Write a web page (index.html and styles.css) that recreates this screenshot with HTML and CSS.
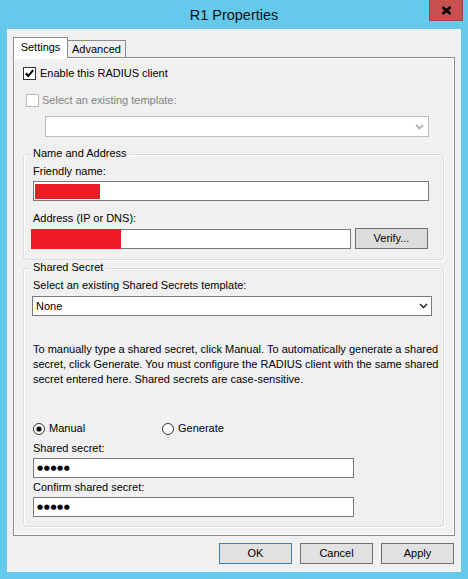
FILE: index.html
```html
<!DOCTYPE html>
<html>
<head>
<meta charset="utf-8">
<title>R1 Properties</title>
<link rel="stylesheet" href="styles.css">
</head>
<body>
<div class="window">
  <div class="titlebar">
    <span class="tb-spacer"></span>
    <div class="title">R1 Properties</div>
    <div class="close-wrap">
      <div class="close">
        <svg width="11" height="9" viewBox="0 0 11 9"><path d="M1.5 1 L9.5 8 M9.5 1 L1.5 8" stroke="#000" stroke-width="2.4" fill="none"/></svg>
      </div>
    </div>
  </div>
  <div class="client">
    <div class="tabs">
      <div class="tab active">Settings</div>
      <div class="tab">Advanced</div>
    </div>
    <div class="page">
      <div class="check-row">
        <svg class="cb" width="13" height="13" viewBox="0 0 13 13"><rect x="0.5" y="0.5" width="12" height="12" fill="#fff" stroke="#333"/><path d="M2.8 6.3 L5.3 9 L10.2 3.2" stroke="#000" stroke-width="2" fill="none"/></svg>
        <span>Enable this RADIUS client</span>
      </div>
      <div class="check-row disabled">
        <svg class="cb" width="13" height="13" viewBox="0 0 13 13"><rect x="0.5" y="0.5" width="12" height="12" fill="#fff" stroke="#bcbcbc"/></svg>
        <span>Select an existing template:</span>
      </div>
      <div class="combo combo-disabled">
        <span class="combo-text"></span>
        <svg class="chev" width="9" height="6" viewBox="0 0 9 6"><path d="M1 1 L4.5 4.5 L8 1" stroke="#b5b5b5" stroke-width="1.8" fill="none"/></svg>
      </div>

      <div class="group g-name">
        <div class="legend">Name and Address</div>
        <div class="label">Friendly name:</div>
        <div class="textbox tb-friendly"><span class="redact red-friendly"></span></div>
        <div class="label label-addr">Address (IP or DNS):</div>
        <div class="addr-row">
          <div class="textbox tb-addr"><span class="redact red-addr"></span></div>
          <div class="btn btn-verify">Verify...</div>
        </div>
      </div>

      <div class="group g-secret">
        <div class="legend">Shared Secret</div>
        <div class="label">Select an existing Shared Secrets template:</div>
        <div class="combo combo-none">
          <span class="combo-text">None</span>
          <svg class="chev" width="9" height="6" viewBox="0 0 9 6"><path d="M1 1 L4.5 4.5 L8 1" stroke="#333" stroke-width="1.6" fill="none"/></svg>
        </div>
        <p class="info">To manually type a shared secret, click Manual. To automatically generate a shared<br>secret, click Generate. You must configure the RADIUS client with the same shared<br>secret entered here. Shared secrets are case-sensitive.</p>
        <div class="radio-row">
          <div class="radio-item r-manual">
            <svg class="rb" width="12" height="12" viewBox="0 0 12 12"><circle cx="6" cy="6" r="5.5" fill="#fff" stroke="#333"/><circle cx="6" cy="6" r="2.6" fill="#111"/></svg>
            <span>Manual</span>
          </div>
          <div class="radio-item">
            <svg class="rb" width="12" height="12" viewBox="0 0 12 12"><circle cx="6" cy="6" r="5.5" fill="#fff" stroke="#333"/></svg>
            <span>Generate</span>
          </div>
        </div>
        <div class="label label-secret">Shared secret:</div>
        <div class="textbox tb-secret"><span class="dots">●●●●●</span></div>
        <div class="label label-confirm">Confirm shared secret:</div>
        <div class="textbox tb-secret"><span class="dots">●●●●●</span></div>
      </div>
    </div>
    <div class="buttons">
      <div class="btn btn-default">OK</div>
      <div class="btn">Cancel</div>
      <div class="btn">Apply</div>
    </div>
  </div>
</div>
</body>
</html>
```

FILE: styles.css
```css
* { box-sizing: border-box; }
html, body { margin: 0; padding: 0; }
body {
  background: #64c9ea;
  font-family: "Liberation Sans", Arial, sans-serif;
  font-size: 11px;
  line-height: 15px;
  color: #000;
}
.window {
  width: 468px;
  height: 579px;
  background: #64c9ea;
  display: flex;
  flex-direction: column;
}
.titlebar {
  height: 29px;
  display: grid;
  grid-template-columns: 1fr auto 1fr;
}
.title {
  font-size: 14.5px;
  line-height: 29px;
  color: #111;
  padding-top: 1px;
}
.close-wrap {
  display: flex;
  justify-content: flex-end;
  align-items: flex-start;
  padding-right: 5px;
}
.close {
  width: 34px;
  height: 21px;
  background: #c75050;
  border: 1px solid #a84242;
  border-top: none;
  display: flex;
  align-items: center;
  justify-content: center;
}
.client {
  margin: 0 7px;
  height: 543px;
  background: #f0f0f0;
  padding: 8px 0 0 6px;
}
.tabs {
  display: flex;
  align-items: flex-end;
  height: 20px;
  position: relative;
  z-index: 1;
}
.tab {
  height: 17px;
  padding: 0 4px 0 4px;
  border: 1px solid #898c95;
  border-bottom: none;
  background: #f0f0f0;
  line-height: 16px;
  margin-left: -1px;
  width: 59px;
  text-align: center;
}
.tab.active {
  height: 21px;
  margin-bottom: -1px;
  margin-left: 0;
  width: 55px;
  background: #fff;
  line-height: 18px;
  padding-bottom: 3px;
  box-shadow: inset 1px 1px 0 #fff;
}
.page {
  width: 442px;
  height: 479px;
  border: 1px solid #898c95;
  box-shadow: inset 1px 1px 0 #fff, inset -1px -1px 0 #fff;
  padding: 9px 10px 0 9px;
}
.check-row {
  display: flex;
  align-items: center;
  height: 13px;
  gap: 4px;
}
.check-row .cb { flex: none; }
.check-row.disabled {
  margin-top: 14px;
  margin-left: 3px;
  gap: 3px;
  color: #838383;
}
.combo {
  height: 21px;
  background: #fff;
  border: 1px solid #7a7a7a;
  display: flex;
  align-items: center;
  justify-content: space-between;
  padding: 0 3px 0 3px;
}
.combo-disabled {
  margin-top: 9px;
  margin-left: 22px;
  width: 384px;
  border-color: #bcbcbc;
  padding-right: 4px;
}
.combo-none {
  margin-top: 3px;
  margin-left: -1px;
  width: 400px;
  height: 20px;
  padding-right: 3px;
}
.group {
  width: 421px;
  border: 1px solid #d5dfe5;
  border-radius: 3px;
  box-shadow: inset 1px 1px 0 #fff, 1px 1px 0 #fff;
  padding: 0 0 0 9px;
}
.g-name {
  margin-top: 17px;
  padding-bottom: 10px;
}
.g-secret {
  margin-top: 8px;
  padding-bottom: 9px;
}
.legend {
  display: table;
  margin-top: -9px;
  margin-left: -2px;
  padding: 0 2px;
  background: #f0f0f0;
}
.label { margin-top: 3px; }
.label-addr { margin-top: 10px; }
.textbox {
  height: 20px;
  background: #fff;
  border: 1px solid #7a7a7a;
  display: flex;
  align-items: center;
}
.tb-friendly {
  margin-top: 2px;
  width: 396px;
}
.redact { display: block; background: #ed1c24; flex: none; }
.red-friendly {
  width: 65px;
  height: 15px;
  margin-left: 1px;
}
.addr-row {
  margin-top: 2px;
  display: flex;
  align-items: flex-start;
  gap: 4px;
  margin-left: -2px;
}
.tb-addr {
  margin-top: 1px;
  width: 320px;
  align-items: stretch;
}
.red-addr {
  width: 90px;
  margin: -1px 0 -1px -1px;
}
.btn {
  width: 73px;
  height: 21px;
  background: #e1e1e1;
  border: 1px solid #707070;
  display: flex;
  align-items: center;
  justify-content: center;
  line-height: 15px;
}
.btn-verify { background: #dddddd; }
.btn-default { border-color: #3c7fb1; }
.info {
  margin: 26px 0 0 0;
  white-space: nowrap;
}
.radio-row {
  margin-top: 35px;
  display: flex;
  height: 13px;
  align-items: center;
}
.radio-item {
  display: flex;
  align-items: center;
  gap: 4px;
}
.r-manual { width: 129px; }
.label-secret { margin-top: 6px; }
.label-confirm { margin-top: 2px; }
.tb-secret {
  margin-top: 2px;
  width: 321px;
  padding-left: 3px;
}
.dots {
  font-family: "DejaVu Sans", sans-serif;
  font-size: 7px;
  letter-spacing: 0.6px;
  line-height: 10px;
}
.buttons {
  margin-top: 7px;
  display: flex;
  justify-content: flex-end;
  gap: 8px;
  padding-right: 7px;
}
```
